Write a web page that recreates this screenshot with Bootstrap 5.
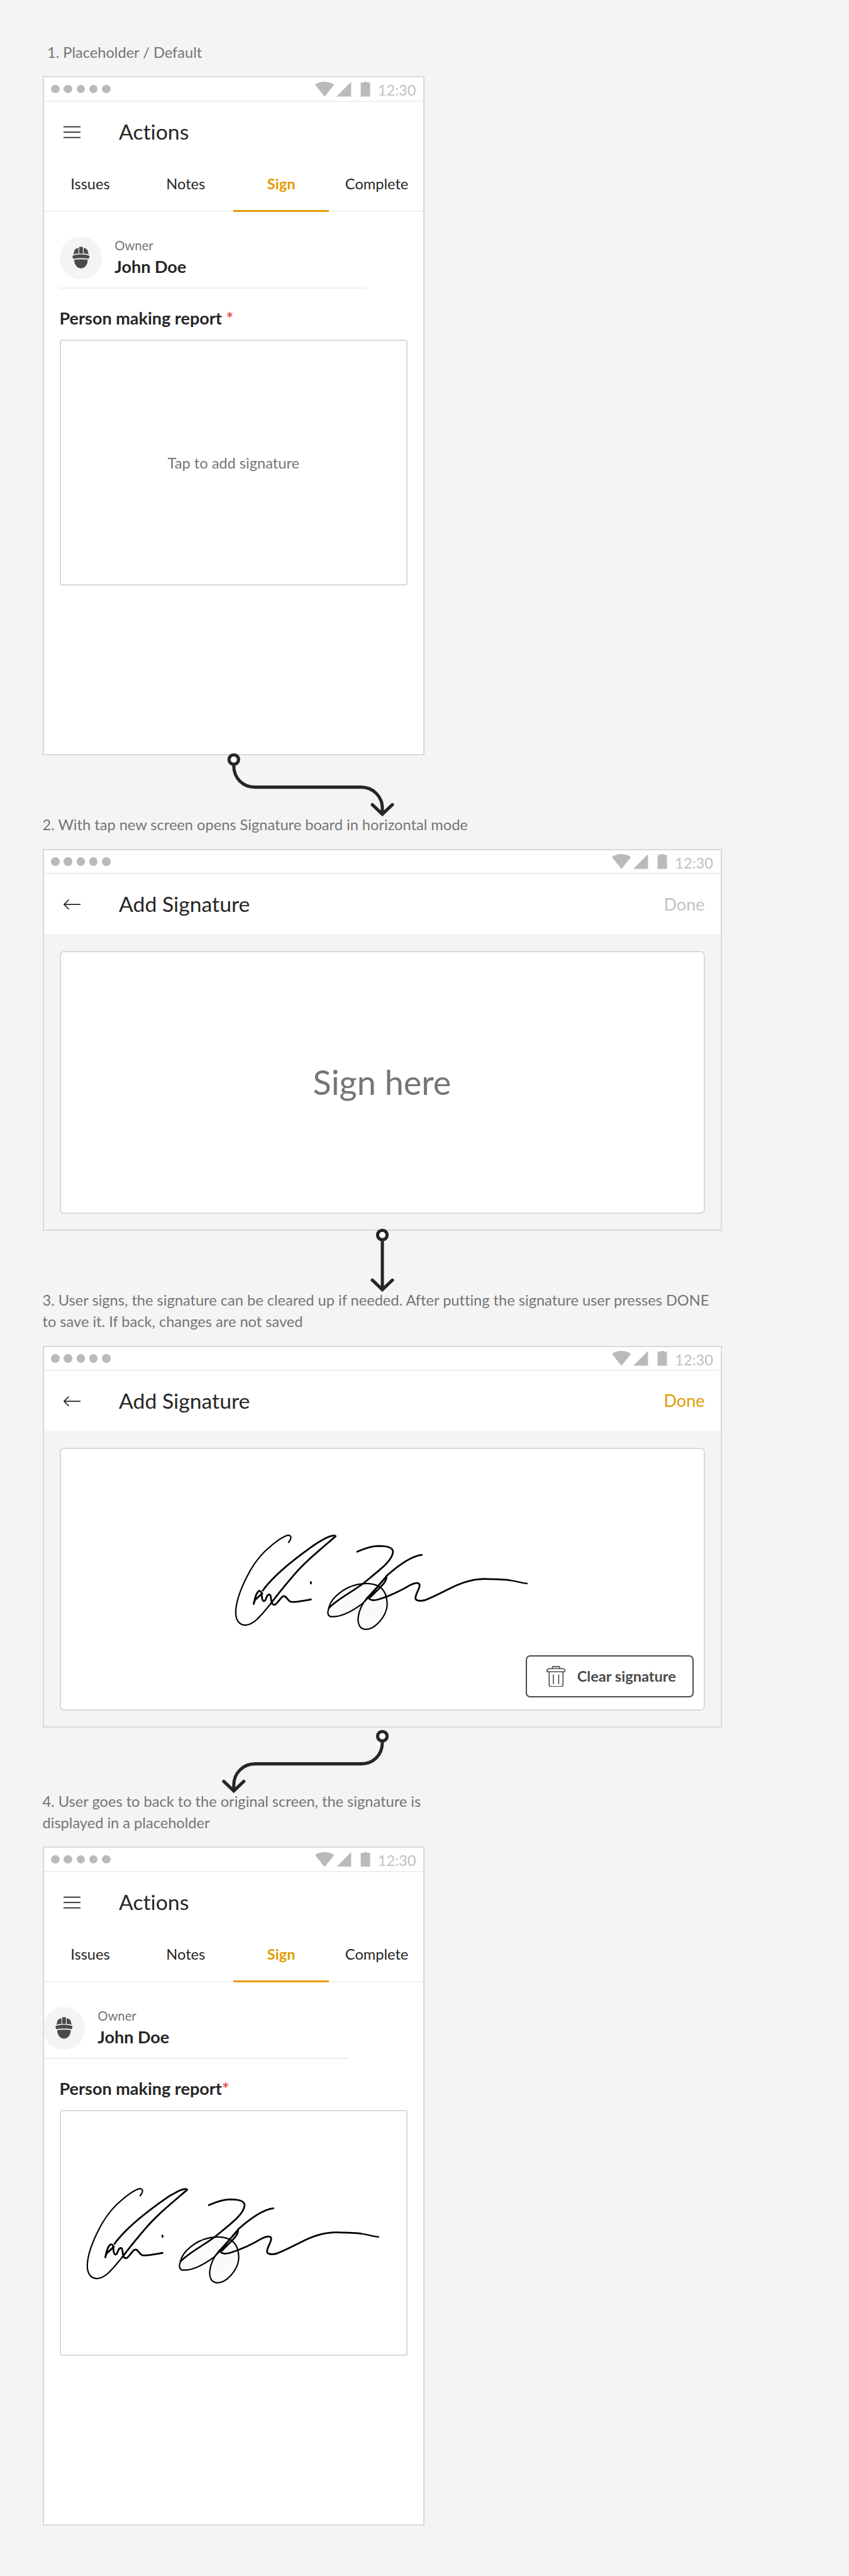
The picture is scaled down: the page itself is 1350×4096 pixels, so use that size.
<!DOCTYPE html>
<html lang="en">
<head>
<meta charset="utf-8">
<meta name="viewport" content="width=device-width, initial-scale=1">
<title>Signature flow</title>
<link href="https://cdn.jsdelivr.net/npm/bootstrap@5.3.0/dist/css/bootstrap.min.css" rel="stylesheet">
<style>
  html { font-size: 13.5px; }
  body { font-family: Lato, "Liberation Sans", sans-serif; font-size: 1.75rem; line-height: 1.2; font-variant-ligatures: none; color: #262626; background: #f4f4f4; }
  .board { min-height: 303.4rem; padding: 4.95rem 0 0 5rem; }
  .caption { color: #757575; line-height: 2.5rem; margin: 0 0 1.55rem; white-space: nowrap; }
  .caption-first { padding-left: .56rem; }
  .screen { outline: 2px solid #d9d9d9; outline-offset: -2px; background: #fff; }
  .portrait { width: 45rem; height: 80rem; }
  .landscape { width: 80rem; height: 45rem; }
  .status { height: 3rem; padding: 0 1rem; border-bottom: 2px solid #efefef; }
  .status .dot { width: 1rem; height: 1rem; background: #bababa; }
  .status .dots { gap: .5rem; padding-top: 1rem; }
  .status svg { width: 6.5rem; height: 1.75rem; margin: .625rem .9rem 0 0; fill: #bababa; }
  .clock { color: #c0c0c0; line-height: 3.4rem; }
  .toolbar { height: 7rem; padding: 0 2rem 0 2.5rem; }
  .toolbar svg { width: 2rem; height: 1.5rem; margin: .125rem 4.5rem 0 0; stroke: #262626; fill: none; stroke-width: 2; }
  .title { font-size: 2.5rem; }
  .done { font-size: 2rem; color: #c2c2c2; }
  .done-on { color: #e09c00; }
  .tabs { height: 6rem; border-bottom: 2px solid #efefef; }
  .tabs .tab { height: 6rem; line-height: 5.4rem; width: 25%; }
  .tabs .tab-on { color: #e09c00; font-weight: 700; border-bottom: 3.4px solid #e09c00; }
  .owner { width: 36rem; height: 9rem; margin-left: 2rem; padding-top: 2.875rem; border-bottom: 2px solid #efefef; }
  .owner-flush { margin-left: 0; }
  .avatar { width: 5rem; height: 5rem; background: #f4f4f4; margin-right: 1.5rem; }
  .avatar svg { width: 5rem; height: 5rem; fill: #4a4a4a; display: block; }
  .role { font-size: 1.5rem; line-height: 2.125rem; color: #757575; }
  .person { font-size: 2rem; line-height: 2.75rem; font-weight: 700; }
  .field { height: 6rem; padding: 2.22rem 0 0 2rem; font-size: 2rem; line-height: 2.5rem; font-weight: 700; }
  .field .req { color: #e5534b; }
  .pad { border: 2px solid #d9d9d9; background: #fff; color: #757575; }
  .portrait .pad { height: 29rem; margin: 0 2rem; border-radius: 4px; }
  .landscape .pad { height: 31rem; border-radius: 7px; }
  .canvas { height: 35rem; padding: 2rem; background: #f4f4f4; }
  .sign-here { font-size: 4rem; }
  .ink { width: 40rem; height: 17.5rem; display: block; flex: none; }
  #signature path { fill: none; stroke: #000; stroke-width: 2.2px; stroke-linecap: round; stroke-linejoin: round; vector-effect: non-scaling-stroke; }
  #signature path.heavy { stroke-width: 2.8px; }
  #signature path.wash { fill: #fafafa; stroke: none; }
  .landscape .ink { margin: 6.875rem 0 0 17.875rem; }
  .portrait .ink { margin: 5.875rem 0 0 .375rem; }
  .clear { right: 1.15rem; bottom: 1.4rem; width: 19.75rem; height: 5rem; border: 2px solid #4a4a4a; border-radius: 7px; color: #4a4a4a; background: #fff; font-size: 1.75rem; font-weight: 700; padding: 0 0 0 2.25rem; }
  .clear svg { width: 2.25rem; height: 2.5rem; margin-right: 1.375rem; fill: none; stroke: #4a4a4a; stroke-width: 5.6; }
  .link-line { display: block; position: relative; width: 45rem; height: 6.95rem; overflow: visible; fill: none; stroke: #262626; stroke-width: 6; stroke-linecap: round; }
  .link-line circle { fill: #fff; }
</style>
</head>
<body>
<svg class="d-none" aria-hidden="true">
  <symbol id="sys" viewBox="72 42 312 84">
    <path d="M72 59C88 47 105 42 126 42s38 5 54 17l-54 67zM193 126l83-84v84zM330 46h18v-4h18v4h18v80h-54z"/>
  </symbol>
  <symbol id="menu" viewBox="0 0 32 24"><path d="M0 2h32M0 12h32M0 22h32"/></symbol>
  <symbol id="back" viewBox="0 0 32 24"><path d="M1 12h31M10 3L1 12l9 9"/></symbol>
  <symbol id="worker" viewBox="36 48 240 240">
    <path d="M146 107h21v38q-10-1-21 0zM111 150c5-7 6-12 7-19 3-11 12-17 24-18v32c-12 0-23 1-31 5zM202 150c-5-7-6-12-7-19-3-11-12-17-24-18v32c12 0 23 1 31 5z"/>
    <path d="M108 161c0-9 24-12 48-12s48 3 48 12c0 6-2 11-6 13-22-5-62-5-84 0-4-2-6-7-6-13z"/>
    <path d="M118 179q38-5 76 0c1 27-15 49-38 49s-39-22-38-49z"/>
  </symbol>
  <symbol id="signature" viewBox="0 0 1568 840" preserveAspectRatio="none">
    <path class="wash" d="M240 465L300 390 420 285 300 492 270 535zM540 575L690 440 760 440 800 480 806 555 750 670 700 689 672 640 690 545 600 610 545 617z"/>
    <path d="M351 197C357 188 364 176 361 165C358 155 348 155 338 161C300 180 265 222 240 250C200 298 175 350 155 400C130 462 108 530 107 590C106 640 125 665 152 665C195 662 230 600 268 545"/>
    <path class="heavy" d="M268 545C300 492 335 440 370 390C425 308 500 235 568 163C566 153 545 161 530 169C500 187 470 210 445 233C390 282 330 338 285 395C265 420 245 445 232 470"/>
    <path class="heavy" d="M190 545L196 523L230 485M190 545C195 520 200 480 215 472C228 470 226 490 228 505C228 525 236 535 243 525C250 508 253 489 263 492C272 497 268 515 272 530C274 545 280 553 290 548C305 535 313 510 325 502C340 495 345 525 360 533C380 538 410 530 454 520"/>
    <path class="heavy" d="M454 422v8"/>
    <path class="heavy" d="M668 250C700 232 730 218 765 217C800 217 833 222 833 250C832 300 770 355 700 425C650 475 590 505 537 568"/>
    <path d="M537 570C545 510 610 450 670 435C700 427 735 428 762 442C800 465 807 510 806 555C800 620 750 688 708 689C680 688 670 660 672 625C676 580 695 535 718 505"/>
    <path d="M537 570C530 590 530 612 545 617C590 622 640 590 690 545C705 530 712 520 718 510"/>
    <path class="heavy" d="M966 268C920 275 860 325 805 385C780 425 745 470 712 515M803 395C800 430 765 460 728 508M795 400L722 505"/>
    <path class="heavy" d="M718 508C725 525 745 527 765 520C820 500 870 470 915 437C935 425 955 422 956 440C955 465 935 490 937 515C940 530 965 530 985 522C1040 495 1080 465 1130 438C1180 412 1220 403 1260 404C1310 405 1340 406 1370 411"/>
    <path d="M1370 411C1400 416 1430 428 1452 430"/>
  </symbol>
</svg>

<main class="board">
  <p class="caption caption-first">1. Placeholder / Default</p>
  <section class="screen portrait">
    <div class="status d-flex align-items-start">
      <div class="dots d-flex me-auto"><i class="dot rounded-circle"></i><i class="dot rounded-circle"></i><i class="dot rounded-circle"></i><i class="dot rounded-circle"></i><i class="dot rounded-circle"></i></div>
      <svg><use href="#sys"/></svg><span class="clock">12:30</span>
    </div>
    <div class="toolbar d-flex align-items-center"><svg><use href="#menu"/></svg><span class="title">Actions</span></div>
    <div class="tabs d-flex text-center"><div class="tab">Issues</div><div class="tab">Notes</div><div class="tab tab-on">Sign</div><div class="tab">Complete</div></div>
    <div class="owner d-flex align-items-start">
      <div class="avatar rounded-circle"><svg><use href="#worker"/></svg></div>
      <div><div class="role">Owner</div><div class="person">John Doe</div></div>
    </div>
    <div class="field">Person making report <span class="req">*</span></div>
    <div class="pad d-flex align-items-center justify-content-center">Tap to add signature</div>
  </section>

  <svg class="link-line" viewBox="80 1424 720 111.2"><path d="M440 1441v3c0 24 18 40 40 40h200c22 0 40 17 40 40v10M701 1517l19 18 19-18"/><circle cx="440" cy="1432" r="9"/></svg>

  <p class="caption">2. With tap new screen opens Signature board in horizontal mode</p>
  <section class="screen landscape">
    <div class="status d-flex align-items-start">
      <div class="dots d-flex me-auto"><i class="dot rounded-circle"></i><i class="dot rounded-circle"></i><i class="dot rounded-circle"></i><i class="dot rounded-circle"></i><i class="dot rounded-circle"></i></div>
      <svg><use href="#sys"/></svg><span class="clock">12:30</span>
    </div>
    <div class="toolbar d-flex align-items-center"><svg><use href="#back"/></svg><span class="title me-auto">Add Signature</span><span class="done">Done</span></div>
    <div class="canvas"><div class="pad sign-here d-flex align-items-center justify-content-center">Sign here</div></div>
  </section>

  <svg class="link-line" viewBox="80 2320 720 111.2"><path d="M720 2337v93M701 2413l19 18 19-18"/><circle cx="720" cy="2328" r="9"/></svg>

  <p class="caption">3. User signs, the signature can be cleared up if needed. After putting the signature user presses DONE<br>to save it. If back, changes are not saved</p>
  <section class="screen landscape">
    <div class="status d-flex align-items-start">
      <div class="dots d-flex me-auto"><i class="dot rounded-circle"></i><i class="dot rounded-circle"></i><i class="dot rounded-circle"></i><i class="dot rounded-circle"></i><i class="dot rounded-circle"></i></div>
      <svg><use href="#sys"/></svg><span class="clock">12:30</span>
    </div>
    <div class="toolbar d-flex align-items-center"><svg><use href="#back"/></svg><span class="title me-auto">Add Signature</span><span class="done done-on">Done</span></div>
    <div class="canvas">
      <div class="pad position-relative d-flex align-items-start">
        <svg class="ink"><use href="#signature"/></svg>
        <button type="button" class="clear position-absolute d-flex align-items-center"><svg viewBox="210 180 108 120"><path d="M213 213v-6q0-12 12-12h78q12 0 12 12v6zM243 195v-7q0-5 5-5h32q5 0 5 5v7M225 213v73q0 11 11 11h56q11 0 11-11v-73M249 228v54M279 228v54"/></svg>Clear signature</button>
      </div>
    </div>
  </section>

  <svg class="link-line mt-2" viewBox="80 3264 720 111.2"><path d="M720 3281v3c0 24-18 40-40 40h-200c-22 0-40 17-40 40v10M421 3357l19 18 19-18"/><circle cx="720" cy="3272" r="9"/></svg>

  <p class="caption">4. User goes to back to the original screen, the signature is<br>displayed in a placeholder</p>
  <section class="screen portrait">
    <div class="status d-flex align-items-start">
      <div class="dots d-flex me-auto"><i class="dot rounded-circle"></i><i class="dot rounded-circle"></i><i class="dot rounded-circle"></i><i class="dot rounded-circle"></i><i class="dot rounded-circle"></i></div>
      <svg><use href="#sys"/></svg><span class="clock">12:30</span>
    </div>
    <div class="toolbar d-flex align-items-center"><svg><use href="#menu"/></svg><span class="title">Actions</span></div>
    <div class="tabs d-flex text-center"><div class="tab">Issues</div><div class="tab">Notes</div><div class="tab tab-on">Sign</div><div class="tab">Complete</div></div>
    <div class="owner owner-flush d-flex align-items-start">
      <div class="avatar rounded-circle"><svg><use href="#worker"/></svg></div>
      <div><div class="role">Owner</div><div class="person">John Doe</div></div>
    </div>
    <div class="field">Person making report<span class="req">*</span></div>
    <div class="pad d-flex align-items-start"><svg class="ink"><use href="#signature"/></svg></div>
  </section>
</main>
<script src="https://cdn.jsdelivr.net/npm/bootstrap@5.3.0/dist/js/bootstrap.bundle.min.js"></script>
</body>
</html>
